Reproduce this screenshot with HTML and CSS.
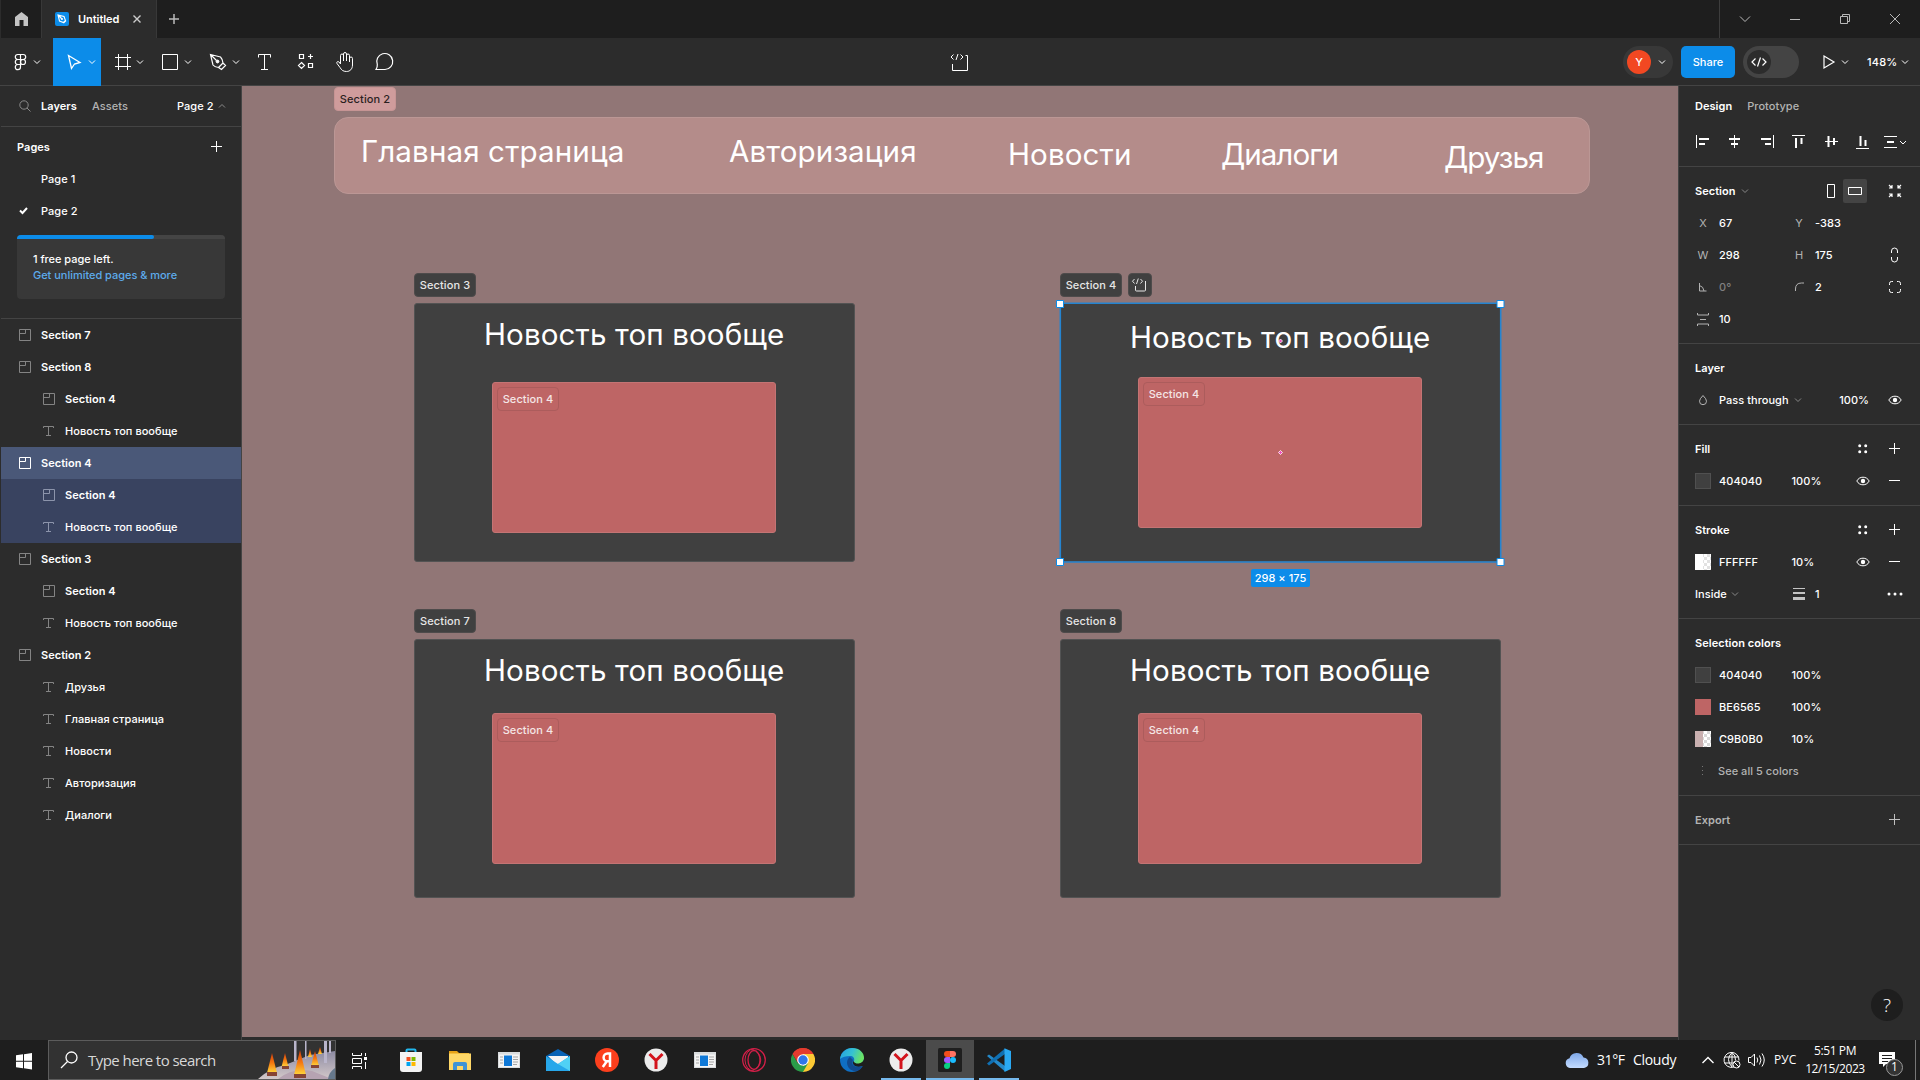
FILE: index.html
```html
<!DOCTYPE html>
<html lang="en">
<head>
<meta charset="utf-8">
<title>Untitled</title>
<link rel="stylesheet" href="styles.css">
</head>
<body>
<svg class="defs" width="0" height="0">
  <symbol id="sec" viewBox="0 0 12 12"><path d="M.5.5h11v11H.5zM.5 4.500h6v-4"/></symbol>
  <symbol id="txt" viewBox="0 0 12 12"><path d="M.5 3V1.500h10V3M5.500 1.500v9M3 10.500h5"/></symbol>
  <symbol id="chev" viewBox="0 0 8 6"><path d="M1 1.500l3 3 3-3"/></symbol>
  <symbol id="eye" viewBox="0 0 14 10"><path d="M.8 5C2.300 2.300 4.500 1.200 7 1.200S11.700 2.300 13.200 5C11.700 7.700 9.500 8.800 7 8.800S2.300 7.700.8 5z"/><circle cx="7" cy="5" r="2.200" fill="#fff" stroke="none"/></symbol>
  <symbol id="plus" viewBox="0 0 12 12"><path d="M0 5.500h11M5.500 0v11"/></symbol>
  <symbol id="minus" viewBox="0 0 12 12"><path d="M0 5.500h11"/></symbol>
  <symbol id="dots" viewBox="0 0 10 10"><path d="M1.700.2a1.500 1.500 0 1 1 0 3 1.500 1.500 0 0 1 0-3zM7.700.2a1.500 1.500 0 1 1 0 3 1.500 1.500 0 0 1 0-3zM1.700 6.200a1.500 1.500 0 1 1 0 3 1.500 1.500 0 0 1 0-3zM7.700 6.200a1.500 1.500 0 1 1 0 3 1.500 1.500 0 0 1 0-3z" fill="#fff" stroke="none"/></symbol>
  <symbol id="yabro" viewBox="0 0 24 24"><circle cx="12" cy="12" r="11.500" fill="#ececec" stroke="none"/><path d="M5.500 6L12 12.500 18.500 6M12 12v9" fill="none" stroke="#d3131c" stroke-width="3"/></symbol>
  <symbol id="appwin" viewBox="0 0 22 16"><path d="M0 0h22v16H0z" fill="#d9dcde" stroke="none"/><path d="M1 2.500h20V15H1z" fill="#f4f4f4" stroke="none"/><path d="M6 3.500h8V14H6z" fill="#0e78d7" stroke="none"/><path d="M2 5h3M2 8h3M2 11h3M15 5h5M15 7.500h5M15 10h5M15 12.500h4" stroke="#a5a5a5"/></symbol>
</svg>

<div class="app">
  <header class="titlebar">
    <div class="home"><svg width="40" height="38"><path d="M14 26V17l6.500-5 6.500 5v9h-4.500v-6h-4v6z" fill="#c4c4c4" stroke="none"/></svg></div>
    <div class="tab">
      <svg width="14" height="14"><rect width="14" height="14" rx="2" fill="#0c8ce9" stroke="none"/><path d="M3 3l6 1.500 1.500 4-2 2-4-1.500zM3 3l4 4M8.500 11l2.500-2.500" stroke-width="1.100"/><circle cx="7" cy="7" r="1" fill="#fff" stroke="none"/></svg>
      <b>Untitled</b>
      <svg width="8" height="8" stroke="#ccc"><path d="M.5.5l7 7M7.500.5l-7 7" stroke-width="1.400"/></svg>
    </div>
    <svg class="newtab" width="12" height="12" stroke="#bbb"><path d="M1 6h10M6 1v10" stroke-width="1.500"/></svg>
    <svg class="wincontrols" width="201" height="38" viewBox="1719 0 201 38" stroke="#b9b9b9"><path d="M1719.500 0v38" stroke="#3d3d3d"/><path d="M1740 16.500l5 5 5-5M1790 19.500h10M1840.500 16.500h7v7h-7zM1842.500 16v-1.500h7v7h-2M1890 14l10 10M1900 14l-10 10"/></svg>
  </header>

  <div class="toolbar">
    <svg width="53" height="48" viewBox="0 38 53 48"><g stroke-width="1.200"><path d="M20.500 54.500h-2.700a2.500 2.500 0 0 0 0 5h2.700zM20.500 54.500h2.700a2.500 2.500 0 0 1 0 5h-2.700zM20.500 59.500h-2.700a2.500 2.500 0 0 0 0 5h2.700zM17.800 64.500a2.600 2.600 0 1 0 2.700 2.600v-2.600z"/><circle cx="23" cy="62" r="2.500"/></g><use href="#chev" x="33" y="59" width="8" height="6"/></svg>
    <svg class="on" width="48" height="48" viewBox="53 38 48 48"><path d="M68.500 55.500l11.500 7-5.500 1.500-3 4.500z" stroke-width="1.300"/><use href="#chev" x="88" y="59" width="8" height="6"/></svg>
    <svg width="48" height="48" viewBox="101 38 48 48"><path d="M118.500 54v16M127.500 54v16M115 57.500h16M115 66.500h16"/><use href="#chev" x="136" y="59" width="8" height="6"/></svg>
    <svg width="48" height="48" viewBox="149 38 48 48"><path d="M162.500 54.500h15v15h-15z"/><use href="#chev" x="184" y="59" width="8" height="6"/></svg>
    <svg width="48" height="48" viewBox="197 38 48 48"><path d="M210.500 54.500l10 2.500q2 2 2.500 6l-4.500 4.500q-4-.500-5.500-2.500zM210.500 54.500l6 6M223 63l2.500 2.500-4 4-3-2" stroke-width="1.200"/><circle cx="217.500" cy="61.500" r="1.400" fill="#fff"/><use href="#chev" x="232" y="59" width="8" height="6"/></svg>
    <svg width="39" height="48" viewBox="245 38 39 48"><path d="M258.500 57.500v-3h12v3M264.500 54.500v15M261 69.500h7"/></svg>
    <svg width="42" height="48" viewBox="284 38 42 48"><path d="M299.500 54.500h4v4h-4zM308.500 63.500h4v4h-4zM310.500 54v5M308 56.500h5M301.500 62.500l3 3-3 3-3-3z" stroke-width="1.200"/></svg>
    <svg width="38" height="48" viewBox="326 38 38 48"><path d="M340.500 64v-8.500a1.500 1.500 0 0 1 3 0V61v-7a1.500 1.500 0 0 1 3 0v7-5.500a1.500 1.500 0 0 1 3 0V62v-3.500a1.500 1.500 0 0 1 3 0V65c0 4-2.500 6.500-6 6.500-3.500 0-5-1.500-6.500-4l-3-4c-1-1.600 1-2.500 2-1.500z"/></svg>
    <svg width="40" height="48" viewBox="364 38 40 48"><path d="M376 69.500c1-1.500 1.500-3 1.300-5a8 8 0 1 1 7.700 5z" stroke-width="1.200"/></svg>
    <svg class="mid" width="22" height="20" viewBox="0 0 22 20"><path d="M4.500 2.500L2 5l2.500 2.500M11.500 2.500L14 5l-2.500 2.500M9 2l-2 6M16.500 3.500h2v15h-15V12"/></svg>
    <div class="right">
      <div class="user"><i>Y</i><svg width="8" height="6"><use href="#chev"/></svg></div>
      <div class="share">Share</div>
      <div class="toggle"><i><svg width="16" height="12"><path d="M4.500 2.500L1 6l3.500 3.500M11.500 2.500L15 6l-3.500 3.500M9.500 1.500l-3 9" stroke-width="1.200"/></svg></i></div>
      <svg class="play" width="28" height="16"><path d="M1 2l10 6-10 6z" stroke-width="1.200"/><use href="#chev" x="18" y="5" width="8" height="6"/></svg>
      <div class="zoom">148%</div><svg width="8" height="6"><use href="#chev"/></svg>
    </div>
  </div>

  <main class="work">
    <aside class="left">
      <div class="tabs">
        <svg width="12" height="12" stroke="#8a8a8a"><circle cx="5" cy="5" r="4.200"/><path d="M8 8l3.500 3.500"/></svg>
        <b>Layers</b><b class="dim">Assets</b><span class="pg">Page 2</span><svg width="8" height="6" stroke="#8a8a8a"><path d="M1 4.500l3-3 3 3"/></svg>
      </div>
      <div class="pages">
        <div class="row head"><b>Pages</b><svg width="12" height="12"><use href="#plus" width="12" height="12"/></svg></div>
        <div class="row page"><span>Page 1</span></div>
        <div class="row page"><svg width="9" height="8"><path d="M1 3.500L3.500 6 8 1" stroke-width="2"/></svg><span>Page 2</span></div>
        <div class="promo"><div class="bar"><i></i></div><p>1 free page left.<br><a>Get unlimited pages &amp; more</a></p></div>
      </div>
      <ul class="layers">
        <li><svg><use href="#sec"/></svg><b>Section 7</b></li>
        <li><svg><use href="#sec"/></svg><b>Section 8</b></li>
        <li class="in"><svg><use href="#sec"/></svg><b>Section 4</b></li>
        <li class="in"><svg><use href="#txt"/></svg>Новость топ вообще</li>
        <li class="sel"><svg><use href="#sec"/></svg><b>Section 4</b></li>
        <li class="in sub"><svg><use href="#sec"/></svg><b>Section 4</b></li>
        <li class="in sub"><svg><use href="#txt"/></svg>Новость топ вообще</li>
        <li><svg><use href="#sec"/></svg><b>Section 3</b></li>
        <li class="in"><svg><use href="#sec"/></svg><b>Section 4</b></li>
        <li class="in"><svg><use href="#txt"/></svg>Новость топ вообще</li>
        <li><svg><use href="#sec"/></svg><b>Section 2</b></li>
        <li class="in"><svg><use href="#txt"/></svg>Друзья</li>
        <li class="in"><svg><use href="#txt"/></svg>Главная страница</li>
        <li class="in"><svg><use href="#txt"/></svg>Новости</li>
        <li class="in"><svg><use href="#txt"/></svg>Авторизация</li>
        <li class="in"><svg><use href="#txt"/></svg>Диалоги</li>
      </ul>
    </aside>

    <section class="canvas">
      <div class="tag tag2">Section 2</div>
      <div class="nav"><span class="n1">Главная страница</span><span class="n2">Авторизация</span><span class="n3">Новости</span><span class="n4">Диалоги</span><span class="n5">Друзья</span></div>
      <div class="group g3"><div class="tag">Section 3</div><div class="card"><h2>Новость топ вообще</h2><div class="pic"><span>Section 4</span></div></div></div>
      <div class="group g4"><div class="tag">Section 4</div><div class="tag devtag"><svg width="22" height="22" stroke="#e6e6e6"><path d="M5.500 5L3.500 7.200l2 2.300M11.500 5l2 2.200-2 2.300M9.300 4.500l-1.800 5.500M16.500 7v9q0 1-1 1h-8q-1 0-1-1v-4"/></svg></div><div class="card"><h2>Новость топ вообще</h2><div class="pic"><span>Section 4</span></div>
        <svg class="selection" width="451" height="269" viewBox="-5 -5 451 269"><path d="M.3.300h440.400v258.700H.3z" stroke="#2484d0" stroke-width="1.600"/><g stroke="#0c8ce9" fill="#fff"><path d="M-3.500-2.500h7v7h-7zM437-2.500h7v7h-7zM-3.500 255.500h7v7h-7zM437 255.500h7v7h-7z"/></g><g fill="#f24fc0" stroke="#fff" stroke-width=".8"><path d="M220.500 36l2 2-2 2-2-2zM220.500 147.500l2 2-2 2-2-2z"/></g></svg></div>
        <div class="size">298 × 175</div></div>
      <div class="group g7"><div class="tag">Section 7</div><div class="card"><h2>Новость топ вообще</h2><div class="pic"><span>Section 4</span></div></div></div>
      <div class="group g8"><div class="tag">Section 8</div><div class="card"><h2>Новость топ вообще</h2><div class="pic"><span>Section 4</span></div></div></div>
    </section>

    <aside class="props">
      <div class="ptabs"><b>Design</b><b class="dim">Prototype</b></div>
      <svg class="align" width="240" height="40" viewBox="1679 126 240 40"><path d="M1696.500 135v13M1734.500 135v13M1773.500 135v13M1792 135.500h13M1825 141.500h13M1856 148.500h13M1884 136.500h13M1884 147.500h13"/><path d="M1699 139h10M1699 144h6M1729 139h11M1731 144h7M1761 139h10M1765 144h6M1796 138v10M1801.500 138v6M1828.500 136v11M1834 138v7M1860.500 136v10M1865.500 140v6M1887 142h7" stroke-width="2"/><use href="#chev" x="1899" y="139.500" width="8" height="6"/></svg>
      <div class="sect">
        <svg class="icons" width="240" height="168" viewBox="1679 175 240 168"><rect x="1843" y="179" width="24" height="24" rx="2" fill="#444" stroke="none"/><path d="M1827.500 184.500h7v13h-7zM1848.500 187.500h13v7h-13z"/><path d="M1889 185l3 3m0-3v3h-3M1901 185l-3 3m0-3v3h3M1889 197l3-3m0 3v-3h-3M1901 197l-3-3m0 3v-3h3" stroke-width="1.200"/><path d="M1891.500 253v-2a3 3 0 0 1 6 0v2M1891.500 257v2a3 3 0 0 0 6 0v-2M1889.500 285v-1.500q0-2 2-2h1.500M1897 281.500h1.500q2 0 2 2v1.500M1889.500 289v1.500q0 2 2 2h1.500M1897 292.500h1.500q2 0 2-2V289"/><g stroke="#b3b3b3"><path d="M1699.500 283v8h7M1699.500 285.500q4 1 4.500 5.500M1795.500 291v-2q0-6 6-6h2.500M1697.500 313v2h11v-2M1700 319.500h6M1697.500 326v-2h11v2"/></g></svg>
        <div class="row"><b>Section</b><svg class="c" width="8" height="6" stroke="#888"><use href="#chev"/></svg></div>
        <div class="row xy"><i>X</i><span>67</span><i>Y</i><span>-383</span></div>
        <div class="row xy"><i>W</i><span>298</span><i>H</i><span>175</span></div>
        <div class="row xy"><i></i><span class="off">0°</span><i></i><span>2</span></div>
        <div class="row xy"><i></i><span>10</span></div>
      </div>
      <div class="sect">
        <div class="row"><b>Layer</b></div>
        <div class="row"><svg class="drop" width="10" height="12" stroke="#b3b3b3"><path d="M5 1.500Q1.500 5 1.500 7.200a3.500 3.500 0 0 0 7 0Q8.500 5 5 1.500z"/></svg><span>Pass through</span><svg class="c" width="8" height="6" stroke="#888"><use href="#chev"/></svg><span class="opa">100%</span><svg class="eye2" width="14" height="10"><use href="#eye"/></svg></div>
      </div>
      <div class="sect">
        <div class="row"><b>Fill</b><svg class="d" width="10" height="10"><use href="#dots"/></svg><svg class="p" width="12" height="12"><use href="#plus"/></svg></div>
        <div class="row"><em class="gray"></em><span class="hex">404040</span><span>100%</span><svg class="d eye" width="14" height="10"><use href="#eye"/></svg><svg class="p" width="12" height="12"><use href="#minus"/></svg></div>
      </div>
      <div class="sect">
        <div class="row"><b>Stroke</b><svg class="d" width="10" height="10"><use href="#dots"/></svg><svg class="p" width="12" height="12"><use href="#plus"/></svg></div>
        <div class="row"><em class="white"></em><span class="hex">FFFFFF</span><span>10%</span><svg class="d eye" width="14" height="10"><use href="#eye"/></svg><svg class="p" width="12" height="12"><use href="#minus"/></svg></div>
        <div class="row"><span class="inside">Inside</span><svg class="c" width="8" height="6" stroke="#888"><use href="#chev"/></svg><svg class="weight" width="12" height="12" stroke="#c4c4c4"><path d="M0 .5h12"/><path d="M0 5h12" stroke-width="2"/><path d="M0 10.500h12" stroke-width="3"/></svg><span>1</span><svg class="more" width="16" height="4" fill="#fff" stroke="none"><circle cx="2" cy="2" r="1.500"/><circle cx="8" cy="2" r="1.500"/><circle cx="14" cy="2" r="1.500"/></svg></div>
      </div>
      <div class="sect">
        <div class="row"><b>Selection colors</b></div>
        <div class="row"><em class="gray"></em><span class="hex">404040</span><span>100%</span></div>
        <div class="row"><em class="red"></em><span class="hex">BE6565</span><span>100%</span></div>
        <div class="row"><em class="pink"></em><span class="hex">C9B0B0</span><span>10%</span></div>
        <div class="row all"><svg width="2" height="10" stroke="#777"><path d="M1.500 0v10" stroke-dasharray="1 3"/></svg>See all 5 colors</div>
      </div>
      <div class="sect last"><div class="row"><b class="dim">Export</b><svg class="p solo" width="12" height="12" stroke="#c0c0c0"><use href="#plus"/></svg></div></div>
      <div class="help">?</div>
    </aside>
  </main>

  <footer class="taskbar">
    <svg width="48" height="40" fill="#fff" stroke="none"><path d="M16 15.300l7-1v6.500h-7zM24 14.200l8-1.200v7.800h-8zM16 21.800h7v6.500l-7-1zM24 21.800h8v7.700l-8-1.200z"/></svg>
    <div class="search"><svg width="18" height="18"><circle cx="11.500" cy="6.500" r="5.500" stroke-width="1.300"/><path d="M7.500 10.500L1 17" stroke-width="1.300"/></svg><span>Type here to search</span>
      <svg class="art" width="77" height="38" viewBox="0 0 77 38" stroke="none">
        <defs><linearGradient id="fire" x1="0" y1="0" x2="0" y2="1"><stop offset="0" stop-color="#cf3c0c"/><stop offset=".5" stop-color="#f5780f"/><stop offset="1" stop-color="#ffd83d"/></linearGradient><linearGradient id="snow" x1="0" y1="0" x2="0" y2="1"><stop offset="0" stop-color="#8d8ba3"/><stop offset="1" stop-color="#d3c8c9"/></linearGradient></defs>
        <path d="M0 38Q12 27 27 24L52 14 77 10V38z" fill="url(#snow)"/><path d="M20 38q15-12 34-8l20 8z" fill="#b6a3b2"/><path d="M70 38q1-7 7-11v11z" fill="#66788c"/>
        <path d="M36 0h2.500v20H36zM47 0h1.500v18H47zM66 0h3v22h-3zM71 0h2v12h-2z" fill="#b9b5cb"/>
        <g fill="url(#fire)"><path d="M14 12l5 20H9z"/><path d="M27 12l3.500 14h-7z"/><path d="M42 9l6 25H36z"/><path d="M57 10l4 15h-8z"/><path d="M52 8l2 8h-4z"/><path d="M62 6l2 7h-4z"/></g>
        <path d="M9 31h10v4H9zM24 25h7v3h-7zM36 33h12v4H36zM53 24h8v3h-8z" fill="#864434"/>
      </svg></div>
    <svg width="50" height="40"><path d="M16.500 13v2.500h9V13M16.500 29v-2.500h9V29M16.500 18.500h9v5h-9zM29.500 13v3M29.500 22v7"/><path d="M28 17h3v3h-3z" fill="#fff" stroke="none"/></svg>
    <div class="apps">
      <div><svg width="24" height="24"><path d="M7.500 6V2.500q0-1 1-1h7q1 0 1 1V6" stroke="#22b8ee" stroke-width="2"/><path d="M1 4h22v17q0 3-3 3H4q-3 0-3-3z" fill="#f3f3f3" stroke="none"/><path d="M7.500 9h4v4h-4z" fill="#f25022" stroke="none"/><path d="M12.500 9h4v4h-4z" fill="#7fba00" stroke="none"/><path d="M7.500 14h4v4h-4z" fill="#00a4ef" stroke="none"/><path d="M12.500 14h4v4h-4z" fill="#ffb900" stroke="none"/></svg></div>
      <div><svg width="24" height="24" stroke="none"><path d="M1 3h8l2 2h10v4H1z" fill="#e8a317"/><path d="M1 5.500h22V22H1z" fill="#ffd868"/><path d="M5 22v-6q0-2 2-2h10q2 0 2 2v6h-4v-4H9v4z" fill="#3f94d6"/></svg></div>
      <div><svg width="22" height="16"><use href="#appwin"/></svg></div>
      <div><svg width="24" height="24" stroke="none"><path d="M0 8l12-7 12 7v8H0z" fill="#0862b5"/><path d="M2 8h20v6l-9 5z" fill="#f4f4f4"/><path d="M0 8l12 8L24 8v15H0z" fill="#27a7ea"/><path d="M24 8L12 16l12 7z" fill="#50d1f5"/></svg></div>
      <div><svg width="24" height="24"><circle cx="12" cy="12" r="12" fill="#fc3f1d" stroke="none"/><path d="M15 19V5.500h-2.500a3.900 3.900 0 0 0 0 7.800H15M12 13l-4.200 6" stroke-width="2.500"/></svg></div>
      <div><svg width="24" height="24"><use href="#yabro"/></svg></div>
      <div><svg width="22" height="16"><use href="#appwin"/></svg></div>
      <div><svg width="24" height="24" stroke="#d21f48"><circle cx="12" cy="12" r="11.300" stroke-width="1.300"/><ellipse cx="12" cy="12" rx="6" ry="9.500" stroke-width="1.300"/><path d="M12 1a9 11 0 0 0 0 22M14 3.500a10 10 0 0 1 0 17"/></svg></div>
      <div><svg width="24" height="24" stroke="none"><path d="M12 12L1.600 6A12 12 0 0 1 22.400 6z" fill="#e33b2e"/><path d="M12 6h10.400A12 12 0 0 1 12 24z" fill="#fcc934"/><path d="M1.600 6L6.800 15 12 18 17.200 15 12 24A12 12 0 0 1 1.600 6z" fill="#2a9c48"/><path d="M1.600 6A12 12 0 0 1 22.400 6H12L7 15z" fill="#e33b2e"/><circle cx="12" cy="12" r="5.800" fill="#fff"/><circle cx="12" cy="12" r="4.700" fill="#2f76ea"/></svg></div>
      <div><svg width="24" height="24" stroke="none"><defs><linearGradient id="edge" x1="0" y1="0" x2="1" y2=".3"><stop offset="0" stop-color="#249fe3"/><stop offset=".55" stop-color="#35c1d3"/><stop offset="1" stop-color="#6ae365"/></linearGradient></defs><circle cx="12" cy="12" r="12" fill="#0f6fc4"/><path d="M0 11C1 4 6 0 12 0c8 0 12 5 12 10 0 4-3 6-6 6-4 0-5-1-4-3 1-3-1-5-4-5-4 0-8 1-10 3z" fill="url(#edge)"/><path d="M10 9c-6 4-2 14 5 14 4 0 6-2 8-5-7 3-13-1-10-6z" fill="#124a8e"/><path d="M24 11v7l-2 0c-6 2-10-1-9-5l1 1c1 2 8 3 10-3z" fill="#1e1e1e"/></svg></div>
      <div class="run"><svg width="24" height="24"><use href="#yabro"/></svg></div>
      <div class="run cur"><svg width="24" height="24" stroke="none"><rect width="24" height="24" rx="1.500" fill="#1f1f1f"/><path d="M12 3H9a3 3 0 0 0 0 6h3z" fill="#f24e1e"/><path d="M12 3h3a3 3 0 0 1 0 6h-3z" fill="#ff7262"/><path d="M12 9H9a3 3 0 0 0 0 6h3z" fill="#a259ff"/><circle cx="15" cy="12" r="3" fill="#1abcfe"/><path d="M12 15H9a3 3 0 1 0 3 3z" fill="#0acf83"/></svg></div>
      <div class="run"><svg width="24" height="24" stroke="none"><path d="M0 8l2-1.500L18 18v5.500z" fill="#2489ca"/><path d="M0 15.500L2 17.500 18 6V.5z" fill="#1070b3"/><path d="M17.500.3L24 3v18l-6.500 3z" fill="#2aa9f3"/></svg></div>
    </div>
    <div class="weather"><svg width="24" height="16" stroke="none"><defs><linearGradient id="cl" x1="0" y1="0" x2="0" y2="1"><stop offset="0" stop-color="#7fa8e8"/><stop offset="1" stop-color="#c4dcff"/></linearGradient></defs><path d="M5 16a5 5 0 0 1-.5-9.800A7.500 7.500 0 0 1 18.500 5.500 5.300 5.300 0 0 1 19 16z" fill="url(#cl)"/></svg><span class="deg">31°F</span><span class="sky">Cloudy</span></div>
    <svg width="72" height="40" viewBox="1699 1040 72 40"><path d="M1701.500 1063l5.500-5.500 5.500 5.500" stroke-width="1.400"/><path d="M1733 1067a7.500 7.500 0 1 1 5-6.500M1724 1057h14M1723.500 1063h8M1731 1052.500v14M1731 1052.500q-7 7 0 14.500M1731 1052.500q4 3 3.500 8"/><circle cx="1735.500" cy="1064.500" r="3.500"/><path d="M1733 1062l5 5"/><path d="M1747.500 1057.500h2.500l3.500-3.500v12l-3.500-3.500h-2.500zM1756 1057.500q1.500 2.500 0 5M1758.500 1055.500q3 4.500 0 9M1761 1053.500q4.500 6.500 0 13"/></svg>
    <span class="lang">РУС</span>
    <div class="clock"><span>5:51 PM</span><span>12/15/2023</span></div>
    <div class="notes"><svg width="26" height="26"><path d="M0 0h16v12h-9l-3 3v-3H0z" fill="#fff" stroke="none"/><path d="M3 3.500h10M3 6.500h10M3 9.500h6" stroke="#1e1e1e"/><circle cx="15.500" cy="15.500" r="8" fill="#333" stroke="#999"/></svg><i>1</i></div>
  </footer>
</div>
</body>
</html>
```
FILE: styles.css
```css
* { box-sizing: border-box; }
body { margin: 0; background: #2c2c2c; color: #fff; font: 500 11px/16px Inter, "Liberation Sans", sans-serif; letter-spacing: .04px; }
svg { flex: none; display: block; }
svg:not([fill]) { fill: none; }
svg:not([stroke]) { stroke: #fff; }
b { font-weight: 600; }
i, em { font-style: normal; }
.defs { position: absolute; }
.dim { color: #b3b3b3; font-weight: 500; }
.app { width: 1920px; height: 1080px; display: flex; flex-direction: column; overflow: hidden; }

.titlebar { height: 38px; background: #1e1e1e; display: flex; align-items: center; border-left: 1px solid #2c2c2c; }
.home { width: 40px; }
.tab { width: 116px; height: 38px; background: #2c2c2c; border: solid #383838; border-width: 0 1px; padding-left: 13px; display: flex; align-items: center; }
.tab b { margin-left: 9px; width: 55px; letter-spacing: -.05px; }
.newtab { margin-left: 11px; }
.wincontrols { margin-left: auto; }

.toolbar { height: 48px; flex: none; display: flex; align-items: center; box-shadow: inset 0 -1px #444; }
.toolbar .on { background: #0c8ce9; }
.mid { margin-left: 545px; }
.right { margin-left: auto; display: flex; align-items: center; padding-right: 11px; }
.user { width: 50px; height: 32px; border-radius: 16px; background: #383838; display: flex; align-items: center; padding-left: 4px; gap: 7px; }
.user i { width: 24px; height: 24px; border-radius: 50%; background: #f24822; text-align: center; line-height: 24px; }
.share { margin-left: 8px; width: 54px; height: 32px; border-radius: 5px; background: #0c8ce9; text-align: center; line-height: 32px; }
.toggle { margin-left: 8px; width: 56px; height: 32px; border-radius: 16px; background: #444; padding: 4px; }
.toggle i { display: flex; width: 24px; height: 24px; border-radius: 50%; background: #2c2c2c; align-items: center; justify-content: center; }
.play { margin-left: 24px; }
.zoom { margin-left: 16px; width: 34px; letter-spacing: .2px; }

.work { height: 954px; flex: none; display: flex; }
.left { width: 242px; border-right: 1px solid #444; padding-left: 1px; }
.tabs { height: 41px; border-bottom: 1px solid #444; display: flex; align-items: center; padding-left: 18px; }
.tabs b:nth-of-type(1) { margin-left: 10px; width: 51px; }
.pg { margin-left: 49px; width: 41px; }
.tabs b:nth-of-type(2) { width: 36px; }
.pages { height: 192px; border-bottom: 1px solid #444; }
.row { height: 32px; display: flex; align-items: center; }
.pages .head { height: 36px; padding: 4px 18px 0 16px; justify-content: space-between; }
.page { padding-left: 40px; }
.page svg { margin-left: -22px; margin-right: 13px; }
.promo { margin: 8px 0 0 16px; width: 208px; height: 64px; border-radius: 4px; background: #383838; overflow: hidden; }
.bar { height: 4px; background: #444; }
.bar i { display: block; width: 137px; height: 4px; background: #0c8ce9; border-radius: 0 2px 2px 0; }
.promo p { margin: 12px 16px; letter-spacing: -.03px; }
.promo a { color: #5dabec; }
.layers { margin: 0; padding: 0; list-style: none; }
.layers li { height: 32px; display: flex; align-items: center; padding-left: 18px; gap: 10px; }
.layers svg { width: 12px; height: 12px; stroke: #848484; }
.layers .in { padding-left: 42px; }
.layers .sel { background: #4a5878; }
.layers .sel svg { stroke: #fff; }
.layers .sub { background: #394360; }
.layers .sub svg { stroke: #8c94ab; }

.canvas { position: relative; width: 1436px; height: 951px; background: #917676; overflow: hidden; }
.tag { height: 24px; width: 62px; border-radius: 4px; background: #404040; border: 1px solid #4e4b4b; color: #e6e6e6; text-align: center; line-height: 22px; letter-spacing: .1px; }
.tag2 { position: absolute; left: 92px; top: 1px; background: #cf9c9c; border-color: #c69494; color: #2b1f1f; }
.nav { position: absolute; left: 92px; top: 31px; width: 1256px; height: 77px; border-radius: 14px; background: #b48c8a; border: 1px solid #bb9795; }
.nav span, .card h2 { position: absolute; font-weight: 400; font-size: 29.6px; line-height: 36px; white-space: nowrap; margin: 0; letter-spacing: .1px; }
.nav .n1 { left: 26px; top: 15px; }
.nav .n2 { left: 394px; top: 15px; }
.nav .n3 { left: 673px; top: 18px; }
.nav .n4 { left: 886px; top: 18px; letter-spacing: -1px; }
.nav .n5 { left: 1109px; top: 21px; letter-spacing: -1px; }
.group { position: absolute; width: 441px; }
.g3 { left: 172px; top: 187px; }
.g4 { left: 818px; top: 187px; }
.g7 { left: 172px; top: 523px; }
.g8 { left: 818px; top: 523px; }
.card { position: relative; margin-top: 6px; height: 259px; border-radius: 3px; background: #404040; border: 1px solid #535353; }
.card h2 { left: 69px; top: 12px; }
.g4 h2 { top: 15px; }
.pic { position: absolute; left: 77px; top: 73px; width: 284px; height: 151px; border-radius: 3px; background: #be6565; border: 1px solid #c47474; }
.g3 .pic { top: 78px; }
.pic span { display: block; margin: 4px; width: 62px; height: 24px; border: 1px solid #ac5c5c; border-radius: 4px; text-align: center; line-height: 22px; color: #f5e6e6; letter-spacing: .1px; }
.devtag { position: absolute; left: 68px; top: 0; width: 24px; }
.selection { position: absolute; left: -6px; top: -6px; }
.size { position: absolute; left: 191px; top: 296px; width: 59px; height: 18px; border-radius: 2px; background: #0c8ce9; text-align: center; line-height: 18px; }

.props { position: relative; flex: 1; border-left: 1px solid #444; }
.ptabs { height: 40px; display: flex; align-items: center; padding-left: 16px; gap: 15px; }
.sect { position: relative; border-top: 1px solid #444; padding: 8px 0 8px 16px; }
.last { border-bottom: 1px solid #444; }
.last .dim { font-weight: 600; }
.icons { position: absolute; left: 0; top: 8px; }
.c { margin-left: 5px; }
.xy i { width: 16px; margin-right: 8px; text-align: center; color: #b3b3b3; font-weight: 400; }
.xy span { width: 72px; }
.xy .off { color: #808080; }
.drop { margin: 0 11px 0 3px; }
.opa { margin-left: auto; }
.eye2 { margin: 0 18px 0 19px; }
.d { margin-left: auto; margin-right: 21px; }
.eye { margin-right: 19px; }
.p { margin-right: 19px; }
.row em { width: 16px; height: 16px; margin-right: 8px; }
.hex { width: 72.5px; }
.gray { background: #404040; border: 1px solid #505050; }
.red { background: #be6565; }
.white { background: linear-gradient(90deg, #fff 50%, transparent 50%), repeating-conic-gradient(#fff 0 25%, #e2e2e2 0 50%) 0 0 / 6px 6px; }
.pink { background: linear-gradient(90deg, #c9b0b0 50%, transparent 50%), repeating-conic-gradient(#fff 0 25%, #d8d8d8 0 50%) 0 0 / 6px 6px; }
.inside { width: 31px; }
.weight { margin: 0 10px 0 54px; }
.more { margin-left: auto; margin-right: 17px; }
.all { color: #b3b3b3; padding-left: 6px; gap: 15px; }
.p.solo { margin-left: auto; }
.help { position: absolute; right: 17px; bottom: 19px; width: 32px; height: 32px; border-radius: 50%; background: #1e1e1e; text-align: center; font: 300 19px/32px "Open Sans", sans-serif; }

.taskbar { height: 40px; flex: none; background: #1e1e1e; display: flex; align-items: center; font-family: "Open Sans", sans-serif; font-weight: 400; letter-spacing: 0; }
.search { position: relative; width: 288px; height: 40px; background: #323232; border: 1px solid #5c5c5c; display: flex; align-items: center; padding-left: 11px; }
.search > span { margin-left: 10px; font-size: 15px; letter-spacing: -.55px; color: #d8d8d8; white-space: nowrap; }
.art { position: absolute; right: 0; top: 0; }
.apps { display: flex; gap: 1px; margin-left: 1px; }
.apps div { position: relative; width: 48px; height: 40px; display: flex; align-items: center; justify-content: center; }
.run::after { content: ""; position: absolute; left: 4px; right: 4px; bottom: 0; height: 2px; background: #76b9ed; }
.cur { background: #4b4b4b; }
.cur::after { left: 0; right: 0; }
.weather { margin-left: auto; display: flex; align-items: center; font-size: 14px; width: 135px; white-space: nowrap; }
.deg { margin-left: 8px; width: 36px; letter-spacing: -.4px; }
.sky { letter-spacing: -.3px; }
.lang { width: 30px; margin-left: 2px; font-size: 12px; }
.clock { width: 62px; display: flex; flex-direction: column; align-items: center; font-size: 12px; line-height: 18px; letter-spacing: -.4px; margin: 0 13px 0 0; white-space: nowrap; }
.notes { position: relative; width: 41px; height: 40px; padding-top: 12px; border-right: 4px solid #1e1e1e; box-shadow: inset -1px 0 #777; }
.notes i { position: absolute; left: 12px; top: 19px; font-size: 12px; }
```
